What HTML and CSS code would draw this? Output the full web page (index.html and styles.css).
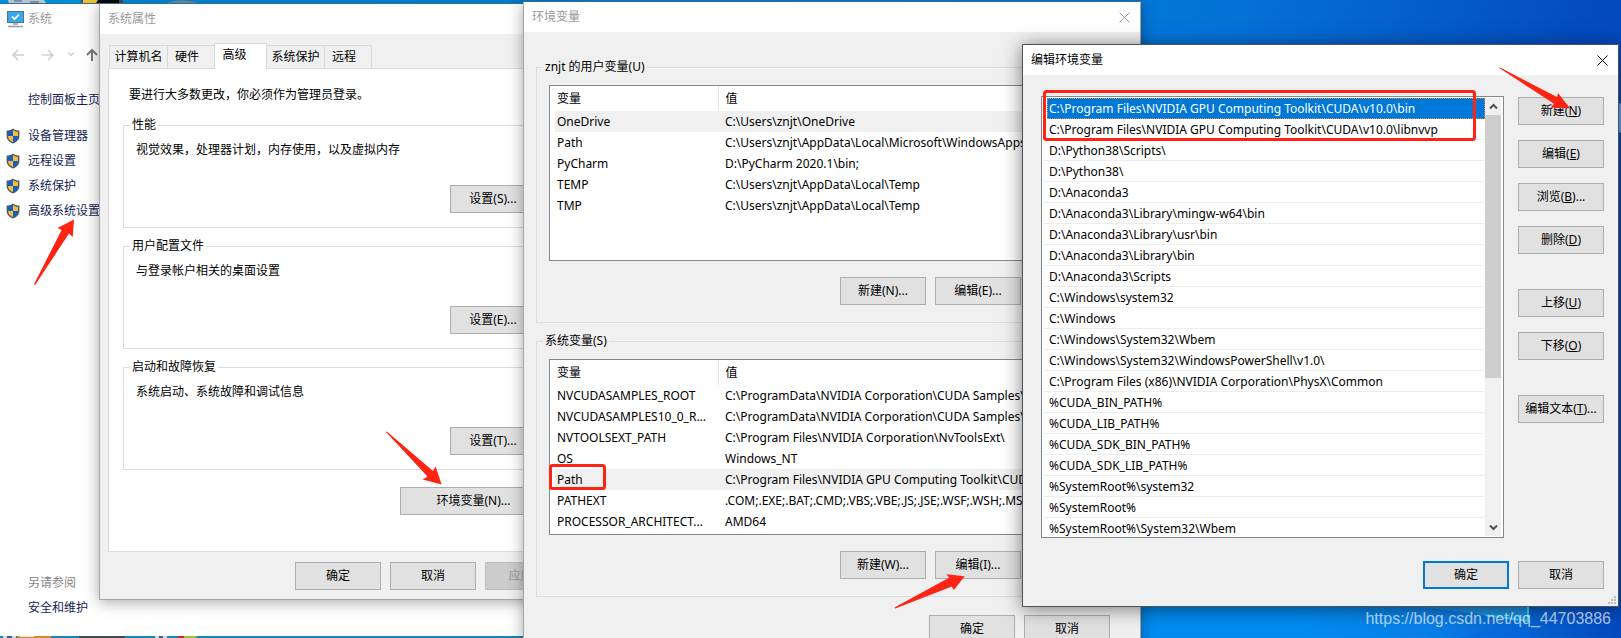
FILE: index.html
```html
<!DOCTYPE html>
<html lang="zh-CN">
<head>
<meta charset="utf-8">
<title>环境变量</title>
<link rel="stylesheet" href="styles.css">
</head>
<body>
<svg width="0" height="0" class="defs" aria-hidden="true">
  <symbol id="shield" viewBox="0 0 14 16">
    <path d="M7 .4C5.2 1.8 3 2.5.6 2.6V8c0 3.500 2.600 6 6.400 7.600C10.800 14 13.400 11.500 13.400 8V2.600C11 2.500 8.800 1.800 7 .4z" fill="#4f5a63"/>
    <path d="M7 2C5.500 3 3.800 3.700 2 3.900V8h5z" fill="#0a63c9"/>
    <path d="M7 2c1.500 1 3.200 1.700 5 1.900V8H7z" fill="#fdb93a"/>
    <path d="M2 8c0 2.800 2 4.900 5 6.200V8z" fill="#fdb93a"/>
    <path d="M12 8c0 2.800-2 4.900-5 6.200V8z" fill="#0a63c9"/>
  </symbol>
  <symbol id="cross" viewBox="0 0 11 11"><path d="M.5.5l10 10M10.500.5l-10 10" fill="none" stroke="currentColor" stroke-width="1"/></symbol>
</svg>
<main class="desktop">
  <svg class="wallpaper" aria-hidden="true">
    <path d="M8 0h36l3 4H9z" fill="#b9c3c9"/><path d="M14 0h8v2h-8zM30 1h9v2h-9z" fill="#7f9099"/>
    <rect x="81" width="42" height="4" fill="#4b5158"/><path d="M83 0h22l-3 4H83z" fill="#f0c030"/><path d="M98 0h21v3H96z" fill="#0c0a08"/>
    <path d="M164 4c8-4 26-5 36 0z" fill="#7396a8"/>
  </svg>
  <svg class="taskbar" aria-hidden="true">
    <rect width="530" height="2" fill="#1a86b8"/>
    <path d="M3 0h13v2H3z" fill="#cfd8e4"/><path d="M7 0h5v2H7z" fill="#3f5f8c"/><path d="M17 0h34v2H17z" fill="#d08a2c"/><path d="M20 0h14v1H20z" fill="#f0e2c8"/>
    <path d="M79 0h46v2H79z" fill="#454b50"/><path d="M155 0h12v2h-12z" fill="#cfd8e4"/><path d="M159 0h4v2h-4z" fill="#3f5f8c"/>
    <path d="M177 0h8v2h-6z" fill="#c9252c"/><path d="M184 0h14l-3 2h-11z" fill="#9fc32a"/>
  </svg>
  <svg class="logo" viewBox="0 0 130 32" aria-hidden="true">
    <path d="M10 0h109v16z" fill="#1c8fe0"/><path d="M119 14v18H50z" fill="#0868e0" opacity=".5"/>
    <path d="M118 0v15" stroke="#2ee0ee" stroke-width="2"/><path d="M75 9l43 6" stroke="#27c3f2" stroke-width="2"/>
  </svg>
  <span class="edge-glow"></span>

  <section class="window system">
    <header class="titlebar">
      <svg width="17" height="17" viewBox="0 0 17 17" aria-hidden="true">
        <rect x=".5" y=".5" width="16" height="11" fill="#35a8ee" stroke="#527487"/>
        <path d="M5 5.500l2.500 2.700L12 3.500" fill="none" stroke="#fff" stroke-width="1.800"/>
        <path d="M6 13h5M1 15.500h15" stroke="#8ba0ad" stroke-width="1.500"/>
      </svg>
      <h1>系统</h1>
    </header>
    <nav class="history">
      <svg width="88" height="14" viewBox="0 0 88 14" fill="none" aria-hidden="true">
        <path d="M12 7H1M6 2L1 7l5 5M30 7h11M36 2l5 5-5 5" stroke="#d2d2d2" stroke-width="1.700"/>
        <path d="M56 4.500l3 3 3-3" stroke="#d2d2d2" stroke-width="1.500"/>
        <path d="M80 13V2M75 7l5-5 5 5" stroke="#7b7b7b" stroke-width="2"/>
      </svg>
    </nav>
    <nav class="side">
      <a class="home" href="#">控制面板主页</a>
      <a href="#"><svg width="14" height="16"><use href="#shield"/></svg>设备管理器</a>
      <a href="#"><svg width="14" height="16"><use href="#shield"/></svg>远程设置</a>
      <a href="#"><svg width="14" height="16"><use href="#shield"/></svg>系统保护</a>
      <a href="#"><svg width="14" height="16"><use href="#shield"/></svg>高级系统设置</a>
    </nav>
    <aside class="see-also">
      <p>另请参阅</p>
      <a href="#">安全和维护</a>
    </aside>
  </section>

  <section class="window props">
    <header class="titlebar"><h1>系统属性</h1></header>
    <div class="tabs" role="tablist">
      <button role="tab">计算机名</button><button role="tab" class="short">硬件</button><button role="tab" class="short active" aria-selected="true">高级</button><button role="tab">系统保护</button><button role="tab" class="short">远程</button>
    </div>
    <div class="panel">
      <p class="intro">要进行大多数更改，你必须作为管理员登录。</p>
      <fieldset><legend>性能</legend><p>视觉效果，处理器计划，内存使用，以及虚拟内存</p><button class="btn">设置(S)...</button></fieldset>
      <fieldset><legend>用户配置文件</legend><p>与登录帐户相关的桌面设置</p><button class="btn">设置(E)...</button></fieldset>
      <fieldset><legend>启动和故障恢复</legend><p>系统启动、系统故障和调试信息</p><button class="btn">设置(T)...</button></fieldset>
      <button class="btn wide">环境变量(N)...</button>
    </div>
    <footer class="actions"><button class="btn">确定</button><button class="btn">取消</button><button class="btn" disabled>应用(A)</button></footer>
  </section>

  <section class="window env">
    <header class="titlebar"><h1>环境变量</h1><button class="close" aria-label="关闭"><svg width="11" height="11"><use href="#cross"/></svg></button></header>
    <fieldset>
      <legend>znjt 的用户变量(U)</legend>
      <div class="listview">
        <table>
          <thead><tr><th>变量</th><th>值</th></tr></thead>
          <tbody>
            <tr class="current"><td>OneDrive</td><td>C:\Users\znjt\OneDrive</td></tr>
            <tr><td>Path</td><td>C:\Users\znjt\AppData\Local\Microsoft\WindowsApps;</td></tr>
            <tr><td>PyCharm</td><td>D:\PyCharm 2020.1\bin;</td></tr>
            <tr><td>TEMP</td><td>C:\Users\znjt\AppData\Local\Temp</td></tr>
            <tr><td>TMP</td><td>C:\Users\znjt\AppData\Local\Temp</td></tr>
          </tbody>
        </table>
      </div>
      <div class="row"><button class="btn">新建(N)...</button><button class="btn">编辑(E)...</button></div>
    </fieldset>
    <fieldset>
      <legend>系统变量(S)</legend>
      <div class="listview">
        <table>
          <thead><tr><th>变量</th><th>值</th></tr></thead>
          <tbody>
            <tr><td>NVCUDASAMPLES_ROOT</td><td>C:\ProgramData\NVIDIA Corporation\CUDA Samples\v10.0</td></tr>
            <tr><td>NVCUDASAMPLES10_0_R...</td><td>C:\ProgramData\NVIDIA Corporation\CUDA Samples\v10.0</td></tr>
            <tr><td>NVTOOLSEXT_PATH</td><td>C:\Program Files\NVIDIA Corporation\NvToolsExt\</td></tr>
            <tr><td>OS</td><td>Windows_NT</td></tr>
            <tr class="current"><td>Path</td><td>C:\Program Files\NVIDIA GPU Computing Toolkit\CUDA\v10.0</td></tr>
            <tr><td>PATHEXT</td><td>.COM;.EXE;.BAT;.CMD;.VBS;.VBE;.JS;.JSE;.WSF;.WSH;.MSC</td></tr>
            <tr><td>PROCESSOR_ARCHITECT...</td><td>AMD64</td></tr>
          </tbody>
        </table>
      </div>
      <div class="row"><button class="btn">新建(W)...</button><button class="btn">编辑(I)...</button></div>
    </fieldset>
    <footer class="actions"><button class="btn">确定</button><button class="btn">取消</button></footer>
  </section>

  <section class="window edit">
    <header class="titlebar"><h1>编辑环境变量</h1><button class="close" aria-label="关闭"><svg width="11" height="11"><use href="#cross"/></svg></button></header>
    <div class="content">
      <div class="listbox">
        <ul>
          <li class="selected">C:\Program Files\NVIDIA GPU Computing Toolkit\CUDA\v10.0\bin</li>
          <li>C:\Program Files\NVIDIA GPU Computing Toolkit\CUDA\v10.0\libnvvp</li>
          <li>D:\Python38\Scripts\</li>
          <li>D:\Python38\</li>
          <li>D:\Anaconda3</li>
          <li>D:\Anaconda3\Library\mingw-w64\bin</li>
          <li>D:\Anaconda3\Library\usr\bin</li>
          <li>D:\Anaconda3\Library\bin</li>
          <li>D:\Anaconda3\Scripts</li>
          <li>C:\Windows\system32</li>
          <li>C:\Windows</li>
          <li>C:\Windows\System32\Wbem</li>
          <li>C:\Windows\System32\WindowsPowerShell\v1.0\</li>
          <li>C:\Program Files (x86)\NVIDIA Corporation\PhysX\Common</li>
          <li>%CUDA_BIN_PATH%</li>
          <li>%CUDA_LIB_PATH%</li>
          <li>%CUDA_SDK_BIN_PATH%</li>
          <li>%CUDA_SDK_LIB_PATH%</li>
          <li>%SystemRoot%\system32</li>
          <li>%SystemRoot%</li>
          <li>%SystemRoot%\System32\Wbem</li>
        </ul>
        <div class="scrollbar">
          <button aria-label="向上滚动"><svg width="9" height="7" viewBox="0 0 9 7"><path d="M1 5.500l3.500-3.500L8 5.500" fill="none" stroke="#505050" stroke-width="2"/></svg></button>
          <div class="track"><div class="thumb"></div></div>
          <button aria-label="向下滚动"><svg width="9" height="7" viewBox="0 0 9 7"><path d="M1 1.500l3.500 3.500L8 1.500" fill="none" stroke="#505050" stroke-width="2"/></svg></button>
        </div>
      </div>
      <div class="commands">
        <button class="btn">新建(<u>N</u>)</button>
        <button class="btn">编辑(<u>E</u>)</button>
        <button class="btn">浏览(<u>B</u>)...</button>
        <button class="btn">删除(<u>D</u>)</button>
        <button class="btn apart">上移(<u>U</u>)</button>
        <button class="btn">下移(<u>O</u>)</button>
        <button class="btn apart">编辑文本(<u>T</u>)...</button>
      </div>
    </div>
    <footer class="actions"><button class="btn default">确定</button><button class="btn">取消</button></footer>
    <svg class="grip" width="9" height="9" viewBox="0 0 9 9" fill="#bdbdbd" aria-hidden="true"><path d="M7 1h2v2H7zM7 4h2v2H7zM7 7h2v2H7zM4 4h2v2H4zM4 7h2v2H4zM1 7h2v2H1z"/></svg>
  </section>

  <svg class="marks" aria-hidden="true">
    <g fill="#ff2314">
      <path d="M74 219.500L72.700 237l-3.700-3.500L35 285.200l-1-.9L61.600 230l-4.100-2z"/>
      <path d="M385.500 431.500l2 .5L433 471l2.600-4.500 6 18-19-5 4.900-3z"/>
      <path d="M894.500 607.500l.8.900 56.500-21.900 2 3.500 10.900-13.800-18.200-1.900 2.500 3.500z"/>
      <path d="M1498.500 67.500l2.500.5 56 29 1-4 12 15.200-19.500-.5 3.500-4z"/>
    </g>
    <g fill="none" stroke="#ff2314" stroke-width="3">
      <rect x="550.500" y="465.500" width="54" height="23" rx="2"/>
      <rect x="1044.500" y="91.500" width="430" height="48" rx="2"/>
    </g>
  </svg>
  <span class="watermark">https://blog.csdn.net/qq_44703886</span>
</main>
</body>
</html>
```

FILE: styles.css
```css
* { box-sizing: border-box; }
body {
  margin: 0;
  font: 12px/16px "Noto Sans", "Noto Sans CJK SC", sans-serif;
  color: #000;
}
h1, p, ul { margin: 0; padding: 0; font-size: 12px; font-weight: 400; }
button { font: inherit; color: inherit; padding: 0; margin: 0; }
svg { display: block; }
.defs { position: absolute; }

.desktop {
  position: relative;
  height: 100vh;
  overflow: hidden;
  background:
    linear-gradient(90deg, #008cf0 80%, #0a80e8 88%, #0448bd 100%) 0 100% / 100% 32px no-repeat,
    linear-gradient(100deg, #0090e0 0, #0088dc 50%, #0471d8 72%, #044bc0 92%, #0448bd 100%);
}
.wallpaper, .marks { position: absolute; left: 0; top: 0; width: 100%; height: 100%; }
.marks { pointer-events: none; }
.taskbar { position: absolute; left: 0; bottom: 0; width: 100%; height: 2px; }
.logo { position: absolute; left: 1410px; top: 606px; width: 130px; height: 32px; }
.edge-glow {
  position: absolute; right: 0; top: 103px; width: 2px; height: 30px;
  background: #6aa8ff; border-radius: 2px 0 0 2px;
}

.window {
  position: absolute;
  background: #f0f0f0;
  border: 1px solid #a4a4a4;
  border-top-color: #2f6f9f;
  box-shadow: 0 2px 14px rgba(0, 0, 0, .35);
}
.titlebar {
  display: flex;
  align-items: center;
  justify-content: space-between;
  height: 30px;
  padding: 0 8px;
  background: #fff;
  color: #999;
}
.close { display: flex; padding: 2px; border: 0; background: none; }

.btn {
  width: 86px;
  height: 28px;
  background: #e1e1e1;
  border: 1px solid #adadad;
  white-space: nowrap;
}
.btn:disabled { background: #ccc; border-color: #bfbfbf; color: #999; }
.btn.default { border: 2px solid #0078d7; }
.actions { display: flex; justify-content: flex-end; gap: 9px; }

fieldset {
  margin: 0 0 10px;
  min-width: 0;
  padding: 9px 10px 14px 6px;
  border: 1px solid #dcdcdc;
}
legend { padding: 0 2px; }

/* Control panel window */
.system { left: -1px; top: 3px; width: 700px; height: 633px; background: #fff; box-shadow: none; border-bottom: 0; }
.system .titlebar { justify-content: flex-start; gap: 4px; padding-left: 7px; }
.history { padding: 14px 12px 28px; }
.side, .see-also { display: flex; flex-direction: column; gap: 9px; align-items: flex-start; }
.side a, .see-also a { display: flex; gap: 8px; color: #151c55; text-decoration: none; }
.side { padding-left: 6px; padding-top: 2px; }
.side .home { margin: 0 0 11px 22px; }
.see-also { padding: 356px 0 0 28px; color: #858585; }

/* System properties window */
.props { left: 99px; top: 3px; width: 481px; }
.tabs { display: flex; align-items: flex-end; padding: 9px 9px 0; }
.tabs button {
  width: 59px;
  height: 23px;
  margin-right: -1px;
  background: #f0f0f0;
  border: 1px solid #d9d9d9;
  border-bottom: 0;
}
.tabs .short { width: 48px; padding-right: 8px; }
.tabs button.active { position: relative; width: 53px; height: 26px; margin-bottom: -1px; padding: 0 12px 4px 0; background: #fff; }
.panel {
  display: flex;
  flex-direction: column;
  margin: 0 8px 10px;
  padding: 18px 23px 36px 14px;
  background: #fff;
  border: 1px solid #dcdcdc;
}
.intro { margin: 0 0 14px 6px; }
.panel fieldset p { margin: 0 0 27px 6px; }
.panel fieldset .btn { display: block; margin-left: auto; }
.panel .wide { width: 147px; align-self: flex-end; margin-top: 7px; }
.props .actions { padding: 0 8px 9px; }

/* Environment variables window */
.env { left: 523px; top: 1px; width: 618px; padding-bottom: 20px; }
.env fieldset { margin: 0 13px 10px 12px; padding: 10px 12px 17px 6px; }
.env .titlebar { margin-bottom: 27px; }
.listview {
  height: 176px;
  margin-left: 6px;
  padding-left: 5px;
  overflow: hidden;
  background: #fff;
  border: 1px solid #828790;
}
.listview table { width: 100%; table-layout: fixed; border-collapse: collapse; }
.listview th { height: 25px; padding: 0 0 0 2px; font-weight: 400; text-align: left; }
.listview th:first-child { width: 163px; border-right: 1px solid #e5e5e5; }
.listview td { height: 21px; padding: 0 0 0 2px; white-space: nowrap; overflow: hidden; }
.listview th + th, .listview td + td { padding-left: 7px; }
.listview .current { background: #f0f0f0; }
.row { display: flex; justify-content: flex-end; gap: 9px; margin-top: 16px; padding-right: 93px; }
.env .actions { margin-top: 18px; padding-right: 30px; }

/* Edit environment variable window */
.edit { left: 1022px; top: 44px; width: 597px; border-color: #4b5259; padding-bottom: 17px; box-shadow: 0 2px 18px rgba(0, 0, 0, .5); }
.edit .titlebar { color: #000; }
.content { display: flex; gap: 14px; padding: 21px 14px 0 18px; }
.listbox {
  display: flex;
  flex: 1;
  min-width: 0;
  height: 442px;
  padding: 1px 2px 1px 1px;
  background: #fff;
  border: 1px solid #828790;
}
.listbox ul { flex: 1; min-width: 0; overflow: hidden; list-style: none; }
.listbox li { height: 21px; padding: 3px 0 1px 6px; border-bottom: 1px solid #ededed; white-space: nowrap; }
.listbox .selected {
  margin-left: 4px;
  padding: 2px 0 0 1px;
  color: #fff;
  background: #0078d7;
  border: 1px dotted #e08a3c;
}
.scrollbar { display: flex; flex-direction: column; width: 16px; background: #f0f0f0; }
.scrollbar button { display: flex; align-items: center; justify-content: center; height: 17px; border: 0; background: #f0f0f0; }
.track { flex: 1; }
.thumb { height: 65%; background: #cdcdcd; }
.commands { display: flex; flex-direction: column; gap: 15px; padding-top: 1px; }
.commands .apart { margin-top: 20px; }
.edit .actions { padding: 23px 14px 0 0; }
.grip { position: absolute; right: 2px; bottom: 2px; }

.watermark {
  position: absolute;
  right: 10px;
  top: 609px;
  font: 16px/20px "Liberation Sans", sans-serif;
  color: rgba(255, 255, 255, .65);
}
```
